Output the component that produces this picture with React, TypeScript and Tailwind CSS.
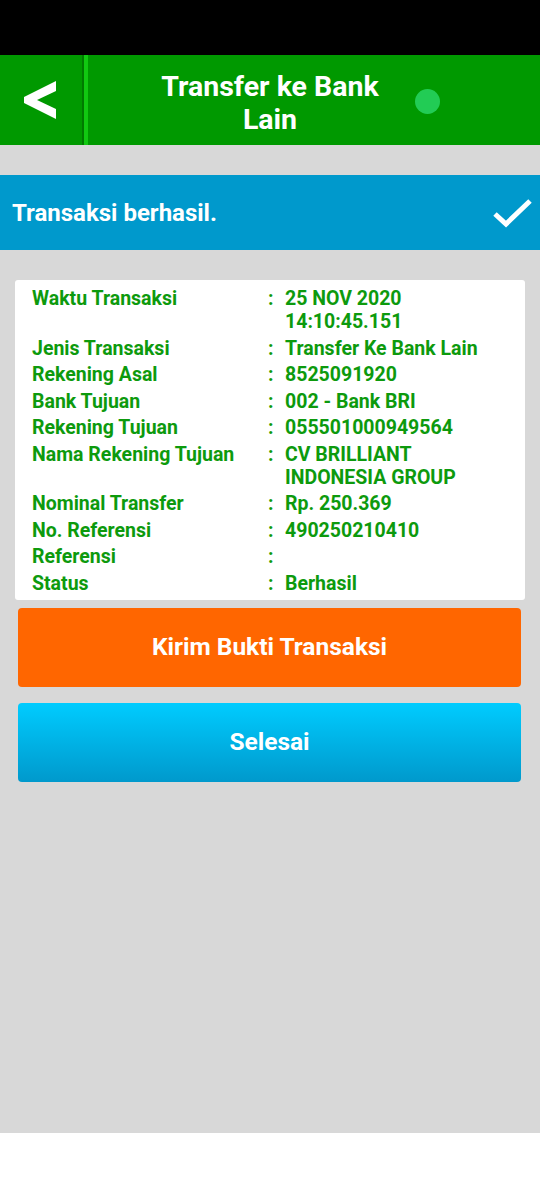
import React from "react";

const rows: { label: string; value: string[] }[] = [
  { label: "Waktu Transaksi", value: ["25 NOV 2020", "14:10:45.151"] },
  { label: "Jenis Transaksi", value: ["Transfer Ke Bank Lain"] },
  { label: "Rekening Asal", value: ["8525091920"] },
  { label: "Bank Tujuan", value: ["002 - Bank BRI"] },
  { label: "Rekening Tujuan", value: ["055501000949564"] },
  { label: "Nama Rekening Tujuan", value: ["CV BRILLIANT", "INDONESIA GROUP"] },
  { label: "Nominal Transfer", value: ["Rp. 250.369"] },
  { label: "No. Referensi", value: ["490250210410"] },
  { label: "Referensi", value: [""] },
  { label: "Status", value: ["Berhasil"] },
];

export default function App() {
  return (
    <div
      className="w-[540px] h-[1200px] flex flex-col bg-white"
      style={{ fontFamily: "Roboto, 'Liberation Sans', sans-serif" }}
    >
      <div className="h-[55px] bg-black" />
      <div className="h-[90px] bg-[#009900] flex">
        <div className="w-[82px] flex items-center justify-center">
          <svg width="34" height="38" viewBox="0 0 34 38">
            <polygon points="32,0 32,10 13,19 32,28 32,38 0,22 0,16" fill="white" />
          </svg>
        </div>
        <div className="w-[2px] bg-[#007a00]" />
        <div className="w-[4px] bg-[#11c811]" />
        <div className="flex-1 relative flex items-center justify-center pr-[88px] pt-[6px]">
          <div className="text-white font-bold text-[28.5px] leading-[33px] text-center w-[250px]">
            Transfer ke Bank Lain
          </div>
          <div className="absolute left-[327px] top-[34px] w-[25px] h-[25px] rounded-full bg-[#22cc55]" />
        </div>
      </div>
      <div className="flex-1 bg-[#d8d8d8] flex flex-col">
        <div className="h-[30px]" />
        <div className="h-[75px] bg-[#0099cc] flex items-center justify-between pl-[12px] pr-[7px]">
          <span className="text-white font-bold text-[24px]">Transaksi berhasil.</span>
          <svg width="40" height="30" viewBox="0 0 40 30">
            <polyline points="2,16 13,26 37,3" fill="none" stroke="white" strokeWidth="5" />
          </svg>
        </div>
        <div className="h-[30px]" />
        <div className="mx-[15px] bg-white rounded-[3px] pt-[7px] pb-[5px] pl-[17px] flex flex-col gap-[3.5px]">
          {rows.map((r) => (
            <div key={r.label} className="flex text-[#0d9a0d] font-bold text-[19.5px] leading-[23px]">
              <div className="w-[236px]">{r.label}</div>
              <div className="w-[17px]">:</div>
              <div className="flex flex-col">
                {r.value.map((v, i) => (
                  <div key={i} className="min-h-[23px]">{v}</div>
                ))}
              </div>
            </div>
          ))}
        </div>
        <div className="mx-[18px] mt-[8px] flex flex-col gap-[16px] w-[503px]">
          <div className="h-[79px] bg-[#ff6600] rounded-[4px] flex items-center justify-center text-white font-bold text-[24.5px]">
            Kirim Bukti Transaksi
          </div>
          <div className="h-[79px] bg-gradient-to-b from-[#00ccff] to-[#0099cc] rounded-[4px] flex items-center justify-center text-white font-bold text-[24.5px]">
            Selesai
          </div>
        </div>
      </div>
      <div className="h-[67px] bg-white" />
    </div>
  );
}
